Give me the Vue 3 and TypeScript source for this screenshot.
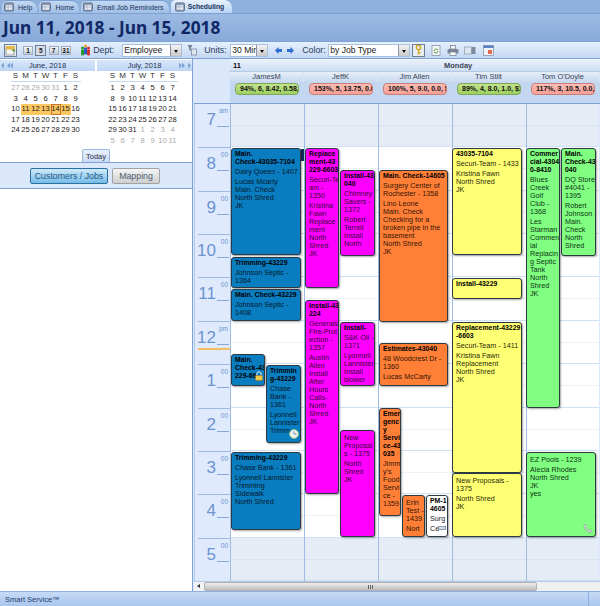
<script setup lang="ts">
interface Appt {
  x: number
  y: number
  x2: number
  y2: number
  kind: string
  groups: string[][]
  icon?: string
}

const tabs = [
  { name: 'Help', active: false },
  { name: 'Home', active: false },
  { name: 'Email Job Reminders', active: false },
  { name: 'Scheduling', active: true },
]

const weekDays = ['S', 'M', 'T', 'W', 'T', 'F', 'S']

const range = (a: number, b: number) => {
  const out: number[] = []
  for (let i = a; i <= b; i++) out.push(i)
  return out
}

// dim = days of other month
const june = [
  ...range(27, 31).map((d) => ({ d, dim: true })),
  ...range(1, 30).map((d) => ({ d, dim: false })),
]
const july = [
  ...range(1, 31).map((d) => ({ d, dim: false })),
  ...range(1, 11).map((d) => ({ d, dim: true })),
]

const hours = [
  { h: '7', m: 'am' },
  { h: '8', m: '00' },
  { h: '9', m: '00' },
  { h: '10', m: '00' },
  { h: '11', m: '00' },
  { h: '12', m: 'pm' },
  { h: '1', m: '00' },
  { h: '2', m: '00' },
  { h: '3', m: '00' },
  { h: '4', m: '00' },
  { h: '5', m: '00' },
]

const staff = [
  { name: 'JamesM', stat: '94%, 6, 8.42, 0.58, $1', ok: true },
  { name: 'JeffK', stat: '153%, 5, 13.75, 0.0, $', ok: false },
  { name: 'Jim Allen', stat: '100%, 5, 9.0, 0.0, $1', ok: false },
  { name: 'Tim Stilt', stat: '89%, 4, 8.0, 1.0, $1', ok: true },
  { name: "Tom O'Doyle", stat: '117%, 3, 10.5, 0.0, $', ok: false },
]

const appts: Appt[] = [
  { x: 232, y: 148, x2: 302, y2: 255, kind: 'blue', groups: [['Main.', 'Check-43035-7104'], ['Dairy Queen - 1407'], ['Lucas Mcarty', 'Main. Check', 'North Shred', 'JK']] },
  { x: 232, y: 257, x2: 302, y2: 288, kind: 'blue', groups: [['Trimming-43229'], ['Johnson Septic -', '1364']] },
  { x: 232, y: 289, x2: 302, y2: 321, kind: 'blue', groups: [['Main. Check-43229'], ['Johnson Septic -', '1408']] },
  { x: 232, y: 354, x2: 266, y2: 386, kind: 'blue', icon: 'lock', groups: [['Main.', 'Check-43', '229-66']] },
  { x: 267, y: 365, x2: 302, y2: 443, kind: 'blue', icon: 'clock', groups: [['Trimmin', 'g-43229'], ['Chase', 'Bank -', '1361'], ['Lyonnell', 'Lannister', 'Trimm']] },
  { x: 232, y: 452, x2: 302, y2: 530, kind: 'blue', groups: [['Trimming-43229'], ['Chase Bank - 1361'], ['Lyonnell Lannister', 'Trimming', 'Sidewalk', 'North Shred']] },
  { x: 306, y: 148, x2: 340, y2: 288, kind: 'pink', groups: [['Replace', 'ment-43', '229-6603'], ['Securi-Te', 'am -', '1350'], ['Kristina', 'Fawn', 'Replace', 'ment', 'North', 'Shred', 'JK']] },
  { x: 341, y: 170, x2: 376, y2: 256, kind: 'pink', groups: [['Install-43', '040'], ['Chimney', 'Savers -', '1372'], ['Robert', 'Terrell', 'Install', 'North']] },
  { x: 306, y: 300, x2: 340, y2: 494, kind: 'pink', groups: [['Install-43', '224'], ['Generals', 'Fire-Prot', 'ection -', '1357'], ['Austin', 'Allen', 'Install', 'After', 'Hours', 'Calls-', 'North', 'Shred', 'JK']] },
  { x: 341, y: 322, x2: 376, y2: 386, kind: 'pink', groups: [['Install-'], ['S&K Oil -', '1371'], ['Lyonnell', 'Lannister', 'Install', 'blower']] },
  { x: 341, y: 430, x2: 376, y2: 537, kind: 'pink', groups: [[], ['New', 'Proposal', 's - 1375'], ['North', 'Shred', 'JK']] },
  { x: 380, y: 170, x2: 449, y2: 322, kind: 'orange', groups: [['Main. Check-14605'], ['Surgery Center of', 'Rochester - 1358'], ['Lino Leone', 'Main. Check', 'Checking for a', 'broken pipe in the', 'basement', 'North Shred', 'JK']] },
  { x: 380, y: 343, x2: 449, y2: 386, kind: 'orange', groups: [['Estimates-43040'], ['48 Woodcrest Dr -', '1360'], ['Lucas McCarty']] },
  { x: 380, y: 408, x2: 402, y2: 516, kind: 'orange', groups: [['Emer', 'genc', 'y', 'Servi', 'ce-43', '035'], ['Jimm', "y's", 'Food', 'Servi', 'ce -', '1359']] },
  { x: 403, y: 495, x2: 426, y2: 537, kind: 'orange', groups: [[], ['Erin', 'Test -', '1439'], ['Nort']] },
  { x: 427, y: 495, x2: 449, y2: 537, kind: 'white', icon: 'chip', groups: [['PM-1', '4605'], ['Surg'], ['Ce']] },
  { x: 453, y: 148, x2: 523, y2: 255, kind: 'yellow', groups: [['43035-7104'], ['Securi-Team - 1433'], ['Kristina Fawn', 'North Shred', 'JK']] },
  { x: 453, y: 278, x2: 523, y2: 299, kind: 'yellow', groups: [['Install-43229']] },
  { x: 453, y: 322, x2: 523, y2: 473, kind: 'yellow', groups: [['Replacement-43229', '-6603'], ['Securi-Team - 1411'], ['Kristina Fawn', 'Replacement', 'North Shred', 'JK']] },
  { x: 453, y: 473, x2: 523, y2: 537, kind: 'yellow', groups: [[], ['New Proposals -', '1375'], ['North Shred', 'JK']] },
  { x: 527, y: 148, x2: 561, y2: 408, kind: 'green', groups: [['Commer', 'cial-4304', '0-8410'], ['Blues', 'Creek', 'Golf', 'Club -', '1368'], ['Les', 'Starman', 'Commerc', 'ial', 'Replacin', 'g Septic', 'Tank', 'North', 'Shred', 'JK']] },
  { x: 562, y: 148, x2: 597, y2: 256, kind: 'green', groups: [['Main.', 'Check-43', '040'], ['DQ Store', '#4041 -', '1395'], ['Robert', 'Johnson', 'Main.', 'Check', 'North', 'Shred']] },
  { x: 527, y: 452, x2: 597, y2: 537, kind: 'green', icon: 'phone', groups: [[], ['EZ Pools - 1239'], ['Alecia Rhodes', 'North Shred', 'JK', 'yes']] },
]

// the schedule canvas starts at 231,104 of the page
const place = (a: Appt) => ({
  left: `${a.x - 231}px`,
  top: `${a.y - 104}px`,
  width: `${a.x2 - a.x}px`,
  height: `${a.y2 - a.y}px`,
})
</script>

<template>
  <div class="app">
    <div class="tabs">
      <div v-for="t in tabs" :key="t.name" class="tab" :class="{ active: t.active }">
        <svg class="tab-icon" width="10" height="10" viewBox="0 0 11 10">
          <rect x="0.5" y="0.5" width="10" height="9" rx="1.5" fill="#8d9cb5" stroke="#5d6c88" />
          <rect x="2" y="3" width="7" height="5" fill="#e8edf5" />
          <path d="M2 5h7M4.5 3v5" stroke="#8d9cb5" stroke-width="0.6" />
        </svg>
        <span>{{ t.name }}</span>
      </div>
    </div>

    <div class="title-band">
      <h1>Jun 11, 2018 - Jun 15, 2018</h1>
    </div>

    <div class="toolbar">
      <span class="tool-box first">
        <svg width="11" height="11" viewBox="0 0 11 11">
          <rect x="1" y="2" width="8" height="8" fill="#f4f4f0" stroke="#77808c" stroke-width="0.7" />
          <rect x="1" y="1" width="9" height="3.5" fill="#e6b84a" />
          <path d="M6 5l4-1v3z" fill="#5f9a49" />
        </svg>
      </span>
      <span class="view-btn">1</span>
      <span class="view-btn on">5</span>
      <span class="view-btn">7</span>
      <span class="view-btn">31</span>
      <svg class="dept-icon" width="11" height="12" viewBox="0 0 11 12">
        <circle cx="2.5" cy="4" r="1.6" fill="#2a9a35" />
        <rect x="1" y="5.5" width="3" height="6" rx="1" fill="#2a9a35" />
        <circle cx="8.5" cy="4" r="1.6" fill="#d8302a" />
        <rect x="7" y="5.5" width="3" height="6" rx="1" fill="#d8302a" />
        <circle cx="5.5" cy="2" r="1.6" fill="#e8a520" />
        <rect x="4" y="3.5" width="3" height="7" rx="1" fill="#2557c8" />
      </svg>
      <span class="tool-label dept">Dept:</span>
      <span class="select sel-dept"><span>Employee</span><i class="arrow"></i></span>
      <svg class="filter-icon" width="10" height="12" viewBox="0 0 10 12">
        <path d="M0.5 1h5L3.8 4v3L2.2 6V4z" fill="#6e8196" />
        <rect x="4.5" y="5" width="5" height="6" fill="#dfe6ee" stroke="#6e8196" stroke-width="0.7" />
      </svg>
      <span class="tool-label units">Units:</span>
      <span class="select sel-units"><span>30 Min</span><i class="arrow"></i></span>
      <svg class="nav-arrow" width="7" height="7" viewBox="0 0 7 7"><path d="M0 3.5L3.5 0v2H7v3H3.5v2z" fill="#2f6fd0" /></svg>
      <svg class="nav-arrow second" width="7" height="7" viewBox="0 0 7 7"><path d="M7 3.5L3.5 0v2H0v3h3.5v2z" fill="#2f6fd0" /></svg>
      <span class="tool-label color">Color:</span>
      <span class="select sel-color"><span>by Job Type</span><i class="arrow"></i></span>
      <span class="tool-box key">
        <svg width="7" height="10" viewBox="0 0 7 10">
          <circle cx="3.5" cy="2.5" r="2.2" fill="none" stroke="#d3a51f" stroke-width="1.4" />
          <path d="M3.5 4.5V9.5M3.5 7.5H5.5M3.5 9H5" stroke="#d3a51f" stroke-width="1.2" />
        </svg>
      </span>
      <svg class="tool-icon i1" width="10" height="11" viewBox="0 0 10 11">
        <rect x="1" y="0.5" width="8" height="10" fill="#f4f6f8" stroke="#7c8a9b" stroke-width="0.7" />
        <path d="M3 6a2.2 2.2 0 0 1 4-1M7 6a2.2 2.2 0 0 1-4 1" fill="none" stroke="#4f9a3b" stroke-width="1" />
      </svg>
      <svg class="tool-icon i2" width="12" height="11" viewBox="0 0 12 11">
        <rect x="3.5" y="0.5" width="5" height="3.5" fill="#f2f4f7" stroke="#6c7888" stroke-width="0.7" />
        <rect x="0.5" y="4" width="11" height="4.5" rx="1" fill="#7b8798" />
        <rect x="3" y="7" width="6" height="3.5" fill="#fff" stroke="#6c7888" stroke-width="0.7" />
      </svg>
      <svg class="tool-icon i3" width="12" height="9" viewBox="0 0 12 9">
        <rect x="0.5" y="1" width="7" height="7" fill="#dfe7f1" stroke="#8d9aab" stroke-width="0.7" />
        <rect x="7.5" y="1" width="4" height="7" fill="#7e8a9b" />
      </svg>
      <svg class="tool-icon i4" width="11" height="11" viewBox="0 0 11 11">
        <rect x="0.5" y="0.5" width="10" height="10" fill="#eef2f7" stroke="#7c8a9b" stroke-width="0.7" />
        <rect x="0.5" y="0.5" width="10" height="2.5" fill="#5b82c0" />
        <rect x="5" y="5" width="4" height="4" fill="#e06a4d" />
      </svg>
    </div>

    <div class="body">
      <aside class="side">
        <div class="months">
          <div class="month">
            <div class="month-head">
              <svg width="13" height="7" viewBox="0 0 13 7" class="m-arrows left">
                <path d="M0 3.5L3 0.5v6zM6 3.5L9 0.5v6zM9 3.5L12 0.5v6z" fill="#7ea4d8" />
              </svg>
              June, 2018
            </div>
            <div class="dow"><span v-for="(w, i) in weekDays" :key="i">{{ w }}</span></div>
            <div class="days">
              <span
                v-for="(c, i) in june"
                :key="i"
                :class="{ dim: c.dim, sel: !c.dim && c.d >= 11 && c.d <= 15, today: !c.dim && c.d === 14 }"
              >{{ c.d }}</span>
            </div>
          </div>
          <div class="month">
            <div class="month-head">
              July, 2018
              <svg width="13" height="7" viewBox="0 0 13 7" class="m-arrows right">
                <path d="M1 0.5L4 3.5L1 6.5zM4 0.5L7 3.5L4 6.5zM10 0.5L13 3.5L10 6.5z" fill="#7ea4d8" />
              </svg>
            </div>
            <div class="dow"><span v-for="(w, i) in weekDays" :key="i">{{ w }}</span></div>
            <div class="days">
              <span v-for="(c, i) in july" :key="i" :class="{ dim: c.dim }">{{ c.d }}</span>
            </div>
          </div>
        </div>
        <div class="today-row"><span class="today-btn">Today</span></div>
        <div class="side-btns">
          <span class="big-btn primary">Customers / Jobs</span>
          <span class="big-btn">Mapping</span>
        </div>
        <div class="side-rest"></div>
      </aside>

      <main class="sched">
        <div class="sched-head">
          <div class="head-gutter"></div>
          <div class="head-main">
            <div class="day-row"><b>11</b><span>Monday</span></div>
            <div class="name-row">
              <div v-for="s in staff" :key="s.name" class="name-cell">{{ s.name }}</div>
            </div>
            <div class="stat-row">
              <div v-for="s in staff" :key="s.name" class="stat-cell">
                <div class="pill" :class="s.ok ? 'ok' : 'over'">{{ s.stat }}</div>
              </div>
            </div>
          </div>
        </div>

        <div class="sched-body">
          <div class="times">
            <div v-for="(t, i) in hours" :key="t.h" class="hour" :class="{ noon: i === 5 }">
              <span class="hour-num">{{ t.h }}</span>
              <span class="hour-min">{{ t.m }}</span>
            </div>
          </div>
          <div class="canvas">
            <div class="grid-cols">
              <div v-for="s in staff" :key="s.name" class="grid-col">
                <div v-for="(t, i) in hours" :key="t.h" class="grid-hour" :class="{ off: i === 0 || i === 10 }"></div>
              </div>
            </div>
            <div class="sliver"></div>
            <div v-for="(a, i) in appts" :key="i" class="appt" :class="a.kind" :style="place(a)">
              <div v-for="(g, j) in a.groups" :key="j" class="group" :class="{ head: j === 0 }">
                <div v-for="(line, k) in g" :key="k">{{ line }}</div>
              </div>
              <svg v-if="a.icon === 'lock'" class="a-icon lock" width="8" height="10" viewBox="0 0 8 10">
                <path d="M1.8 4.5V3a2.2 2.2 0 0 1 4.4 0v1.5" fill="none" stroke="#eee" stroke-width="1" />
                <rect x="0.5" y="4.5" width="7" height="5" rx="0.8" fill="#f2c84b" stroke="#8a6a14" stroke-width="0.5" />
              </svg>
              <svg v-if="a.icon === 'clock'" class="a-icon clock" width="10" height="10" viewBox="0 0 10 10">
                <circle cx="5" cy="5" r="4.5" fill="#eef2f2" stroke="#7fbf7a" />
                <path d="M5 2.5V5H7.5" fill="none" stroke="#567" stroke-width="0.7" />
              </svg>
              <svg v-if="a.icon === 'phone'" class="a-icon phone" width="9" height="9" viewBox="0 0 9 9">
                <path d="M1 1L3 .5 4 2.5 3 3.5C3.5 5 4.5 5.800 6 6.300L7 5.500 8.700 7 8 8.500C4 8.500 .8 5 1 1z" fill="#d9dedd" stroke="#7b8a85" stroke-width="0.5" />
              </svg>
              <svg v-if="a.icon === 'chip'" class="a-icon chip" width="8" height="4" viewBox="0 0 8 4">
                <rect x="0.300" y="0.300" width="7.400" height="3.400" fill="#cfd8e6" stroke="#68758a" stroke-width="0.6" />
              </svg>
            </div>
          </div>
        </div>

        <div class="hscroll">
          <span class="h-arrow"></span>
          <span class="h-thumb"><i></i></span>
          <span class="h-track"></span>
        </div>
      </main>
    </div>

    <div class="status">
      <span class="status-text">Smart Service™</span>
      <span class="status-end"></span>
    </div>
  </div>
</template>

<style>
html,
body {
  margin: 0;
  background: #fff;
}
</style>

<style scoped>
.app {
  width: 600px;
  height: 606px;
  display: flex;
  flex-direction: column;
  overflow: hidden;
  font-family: "Liberation Sans", Arial, sans-serif;
  color: #1c2c48;
  background: #bcd2ee;
}

/* tabs */
.tabs {
  height: 14px;
  display: flex;
  align-items: flex-end;
  gap: 2px;
  padding-left: 2px;
  background: #8fb1de;
  border-bottom: 1px solid #7ba0d3;
  box-sizing: border-box;
  flex: none;
}
.tab {
  height: 13px;
  display: flex;
  align-items: center;
  gap: 4px;
  padding: 0 5px 0 2px;
  font-size: 7px;
  font-weight: 400;
  color: #1b3358;
  background: linear-gradient(#c3d8f2, #a0bfe6);
  border-top: 1px solid #7b9fd0;
  border-radius: 5px 8px 0 0;
  box-sizing: border-box;
  white-space: nowrap;
}
.tab.active {
  color: #1a3358;
  font-weight: 700;
  font-size: 6.800px;
  gap: 3px;
  padding: 0 8px 0 4px;
  height: 14px;
  background: linear-gradient(#e8f2fd, #b8d3f3);
}
.tab-icon {
  flex: none;
}

.title-band {
  height: 27px;
  flex: none;
  background: linear-gradient(#9dbae2, #88a9d9);
  display: flex;
  align-items: center;
  padding-left: 3px;
}
h1 {
  margin: 0;
  font-family: "Noto Sans", "Liberation Sans", sans-serif;
  font-size: 17.300px;
  line-height: 24px;
  font-weight: 700;
  color: #0f2865;
  white-space: nowrap;
}

/* toolbar */
.toolbar {
  height: 18px;
  flex: none;
  display: flex;
  align-items: center;
  box-sizing: border-box;
  padding-left: 4px;
  background: linear-gradient(#e6f0fd, #c4d8f3);
  border-top: 1px solid #7ea2d4;
  border-bottom: 1px solid #7ea2d4;
  font-size: 8.800px;
}
.tool-box {
  width: 13px;
  height: 13px;
  display: flex;
  align-items: center;
  justify-content: center;
  background: #e8eef5;
  border: 1px solid #6f7e92;
  box-sizing: border-box;
  flex: none;
}
.tool-box.first {
  margin-right: 6px;
}
.view-btn {
  width: 10px;
  height: 9px;
  margin-right: 2.300px;
  box-sizing: border-box;
  font-size: 6.500px;
  line-height: 8px;
  font-weight: 700;
  text-align: center;
  color: #1a1a1a;
  background: linear-gradient(#f4f6f8, #bfcad8);
  border: 1px solid #a0aec2;
  flex: none;
}
.view-btn.on {
  border-color: #6f7e92;
  background: #d5dce5;
  width: 11px;
  height: 11px;
  line-height: 10px;
}
.dept-icon {
  margin-left: 7px;
  flex: none;
}
.tool-label {
  color: #2a3c5c;
  white-space: nowrap;
  flex: none;
}
.tool-label.dept {
  margin-left: 2px;
  width: 29px;
}
.tool-label.units {
  margin-left: 7px;
  width: 26px;
}
.tool-label.color {
  margin-left: 8px;
  width: 26px;
}
.select {
  height: 13px;
  display: flex;
  align-items: center;
  box-sizing: border-box;
  padding-left: 1px;
  background: #fff;
  border: 1px solid #a8bfdd;
  font-size: 8.600px;
  color: #222;
  position: relative;
  flex: none;
}
.sel-dept {
  width: 60px;
}
.sel-units {
  width: 38px;
}
.sel-color {
  width: 82px;
}
.arrow {
  position: absolute;
  right: 0;
  top: 0;
  bottom: 0;
  width: 10px;
  background: linear-gradient(#f3f3f3, #c9c9c9);
  border-left: 1px solid #8b97a6;
}
.arrow::after {
  content: "";
  position: absolute;
  left: 3px;
  top: 5px;
  border: 2px solid transparent;
  border-top: 3px solid #111;
  border-bottom: none;
}
.filter-icon {
  margin-left: 5px;
  flex: none;
}
.nav-arrow {
  margin-left: 7px;
  flex: none;
}
.nav-arrow.second {
  margin-left: 5px;
}
.tool-box.key {
  margin-left: 2px;
}
.tool-icon {
  flex: none;
}
.i1 {
  margin-left: 6px;
}
.i2 {
  margin-left: 6px;
}
.i3 {
  margin-left: 5px;
}
.i4 {
  margin-left: 7px;
}

.body {
  flex: 1;
  min-height: 0;
  display: flex;
}

/* left panel */
.side {
  width: 193px;
  flex: none;
  display: flex;
  flex-direction: column;
  background: #fff;
  border-right: 1px solid #7ea2d4;
  box-sizing: border-box;
}
.months {
  display: flex;
  gap: 2px;
  height: 94px;
  flex: none;
}
.month {
  flex: 1;
}
.month-head {
  height: 11px;
  margin-top: 1px;
  position: relative;
  font-size: 7.500px;
  line-height: 11px;
  text-align: center;
  color: #22324e;
  background: linear-gradient(#d7e6fb, #c0d6f5);
}
.m-arrows {
  position: absolute;
  top: 2px;
}
.m-arrows.left {
  left: 1px;
}
.m-arrows.right {
  right: 1px;
}
.dow {
  display: grid;
  grid-template-columns: repeat(7, 10px);
  justify-content: center;
  font-size: 8px;
  line-height: 10px;
  text-align: center;
  color: #333;
  border-bottom: 1px solid #c6d9f2;
  width: 70px;
  margin: 0 auto;
  position: relative;
  left: -2px;
}
.days {
  display: grid;
  grid-template-columns: repeat(7, 10px);
  grid-auto-rows: 10.500px;
  justify-content: center;
  font-size: 7.600px;
  line-height: 10.500px;
  text-align: center;
  color: #222;
  margin-top: 1px;
  padding-right: 4px;
}
.days .dim {
  color: #a9a9a9;
}
.days .sel {
  background: #fbc75f;
}
.days .today {
  box-shadow: inset 0 0 0 1px #c9702a;
}
.today-row {
  height: 13px;
  flex: none;
  display: flex;
  justify-content: center;
  margin-top: -4px;
  box-sizing: border-box;
}
.today-btn {
  width: 28px;
  height: 13px;
  font-size: 7.500px;
  line-height: 13px;
  text-align: center;
  box-sizing: border-box;
  color: #334;
  background: linear-gradient(#e8f1fc, #c7daf4);
  border: 1px solid #9bb7dc;
  border-bottom: none;
  border-radius: 2px 2px 0 0;
}
.side-btns {
  height: 27px;
  flex: none;
  box-sizing: border-box;
  display: flex;
  align-items: center;
  gap: 4px;
  padding-left: 30px;
  background: #dbe8fb;
  border-top: 1px solid #7ea2d4;
  border-bottom: 1px solid #7ea2d4;
}
.big-btn {
  width: 48px;
  height: 16px;
  box-sizing: border-box;
  font-size: 8.800px;
  line-height: 14px;
  text-align: center;
  color: #4c5c6e;
  background: linear-gradient(#f5f5f5, #cfcfcf);
  border: 1px solid #a1a1a1;
  border-radius: 2px;
  white-space: nowrap;
}
.big-btn.primary {
  width: 78px;
  color: #1d557f;
  background: linear-gradient(#cfeafb, #74bce8);
  border-color: #2d6f9f;
}
.side-rest {
  flex: 1;
}

/* schedule */
.sched {
  flex: 1;
  min-width: 0;
  display: flex;
  flex-direction: column;
  background: #dbe8fb;
  padding-left: 1px;
}
.sched-head {
  height: 45px;
  flex: none;
  display: flex;
  border-bottom: 1px solid #7ea2d4;
  box-sizing: border-box;
}
.head-gutter {
  width: 36px;
  flex: none;
}
.head-main {
  flex: 1;
  display: flex;
  flex-direction: column;
  background: #c3d7f1;
}
.day-row {
  height: 13px;
  flex: none;
  display: flex;
  align-items: center;
  font-size: 7.500px;
  background: linear-gradient(#e8f0fb, #cfdef3);
  border-bottom: 1px solid #b4c9e6;
  box-sizing: border-box;
  color: #3a4658;
  border-top: 1px solid #f3f7fd;
}
.day-row b {
  margin-left: 3px;
  color: #111;
}
.day-row span {
  margin-left: 203px;
  font-weight: 700;
}
.name-row {
  height: 10px;
  flex: none;
  display: flex;
  background: linear-gradient(#e6eef9, #c9d9ef);
}
.name-cell {
  width: 74px;
  flex: none;
  box-sizing: border-box;
  font-size: 7.500px;
  line-height: 10px;
  text-align: center;
  color: #3a4658;
  border-right: 1px solid #d7e2f2;
}
.stat-row {
  flex: 1;
  display: flex;
}
.stat-cell {
  width: 74px;
  flex: none;
  padding: 1px 5px 0 5px;
  box-sizing: border-box;
}
.pill {
  height: 12px;
  box-sizing: border-box;
  overflow: hidden;
  white-space: nowrap;
  padding: 0 4px;
  font-size: 7px;
  line-height: 10px;
  font-weight: 700;
  color: #111;
  border-radius: 4px;
  text-align: left;
}
.pill.ok {
  background: linear-gradient(#c3e28b, #9dd062);
  border: 1px solid #7fa75a;
}
.pill.over {
  background: linear-gradient(#fbbdb5, #f7a098);
  border: 1px solid #cb7d76;
}
.sched-body {
  height: 477px;
  flex: none;
  display: flex;
}
.times {
  width: 36px;
  flex: none;
  background: #dfeafc;
  border-left: 1px solid #b6cbe8;
  box-sizing: border-box;
}
.hour {
  height: 43.360px;
  box-sizing: border-box;
  position: relative;
  color: #6d93d0;
  margin-left: 3px;
  border-top: 1px solid #9fbae0;
}
.hour:first-child {
  border-top: none;
}
.hour::after {
  content: "";
  position: absolute;
  left: 19px;
  width: 12px;
  top: 22px;
  border-top: 1px solid #88a8d8;
}
.hour-num {
  position: absolute;
  right: 14px;
  top: 5px;
  font-size: 17px;
  line-height: 22px;
}
.hour-min {
  position: absolute;
  right: 2px;
  top: 3px;
  font-size: 6.500px;
  line-height: 8px;
}
.noon::before {
  content: "";
  position: absolute;
  left: 0;
  right: 0;
  top: 26px;
  height: 2px;
  background: #f3bd66;
}
.canvas {
  width: 369px;
  flex: none;
  position: relative;
  overflow: hidden;
}
.grid-cols {
  display: flex;
  height: 100%;
  background: #fff;
}
.grid-col {
  width: 74px;
  flex: none;
  box-sizing: border-box;
  border-left: 1px solid #9dbbe3;
}
.grid-hour {
  height: 43.360px;
  box-sizing: border-box;
  border-bottom: 1px solid #cfdff4;
  background: linear-gradient(transparent 21px, #edf2f9 21px, #edf2f9 22px, transparent 22px);
}
.grid-hour.off {
  background: linear-gradient(#e5ecf6 21px, #d9e3f2 21px, #d9e3f2 22px, #e5ecf6 22px);
}
.sliver {
  position: absolute;
  left: 71px;
  top: 45px;
  width: 3px;
  height: 12px;
  background: #14305f;
}
.appt {
  position: absolute;
  box-sizing: border-box;
  padding: 1px 1px 0 3px;
  border: 1px solid #2e3a42;
  border-radius: 3px;
  box-shadow: 1px 1px 2px rgba(0, 0, 0, 0.35);
  font-size: 7.200px;
  line-height: 8px;
  white-space: nowrap;
  overflow: hidden;
}
.group {
  margin-bottom: 2px;
}
.group.head {
  font-size: 6.900px;
  font-weight: 700;
  color: #000;
}
.blue {
  background: #0a7cc0;
  color: #021a2c;
}
.pink {
  background: #ff00ff;
  color: #3a003a;
}
.orange {
  background: #ff7f37;
  color: #331505;
}
.yellow {
  background: #ffff74;
  color: #2a2a08;
}
.green {
  background: #80ff80;
  color: #0e3316;
}
.white {
  background: #fff;
  color: #222;
}
.a-icon {
  position: absolute;
}
.lock {
  right: 1px;
  bottom: 4px;
}
.clock {
  right: 1px;
  bottom: 3px;
}
.phone {
  right: 3px;
  bottom: 3px;
}
.chip {
  right: 1px;
  bottom: 6px;
}
.hscroll {
  height: 9px;
  flex: none;
  display: flex;
  border-top: 1px solid #b6cbe8;
  border-bottom: 1px solid #7ea2d4;
  background: #eef0f2;
}
.h-arrow {
  width: 10px;
  flex: none;
  position: relative;
  background: #f1f3f5;
}
.h-arrow::after {
  content: "";
  position: absolute;
  left: 3px;
  top: 2px;
  border: 2px solid transparent;
  border-right: 3px solid #333;
  border-left: none;
}
.h-thumb {
  width: 333px;
  flex: none;
  display: flex;
  align-items: center;
  justify-content: center;
  box-sizing: border-box;
  background: linear-gradient(#ededed, #bdbdbd);
  border: 1px solid #b0b0b0;
  border-radius: 2px;
}
.h-thumb i {
  width: 5px;
  height: 4px;
  background: repeating-linear-gradient(90deg, #666 0 1px, transparent 1px 2px);
}
.h-track {
  flex: 1;
}
.status {
  height: 15px;
  flex: none;
  display: flex;
  align-items: center;
  justify-content: space-between;
  box-sizing: border-box;
  background: linear-gradient(#c6daf6, #a9c6ec);
  border-top: 1px solid #8fb0de;
}
.status-text {
  margin-left: 5px;
  font-size: 7.500px;
  color: #1d3d70;
}
.status-end {
  width: 11px;
  height: 100%;
  border-left: 1px solid #8fb0de;
}
</style>
